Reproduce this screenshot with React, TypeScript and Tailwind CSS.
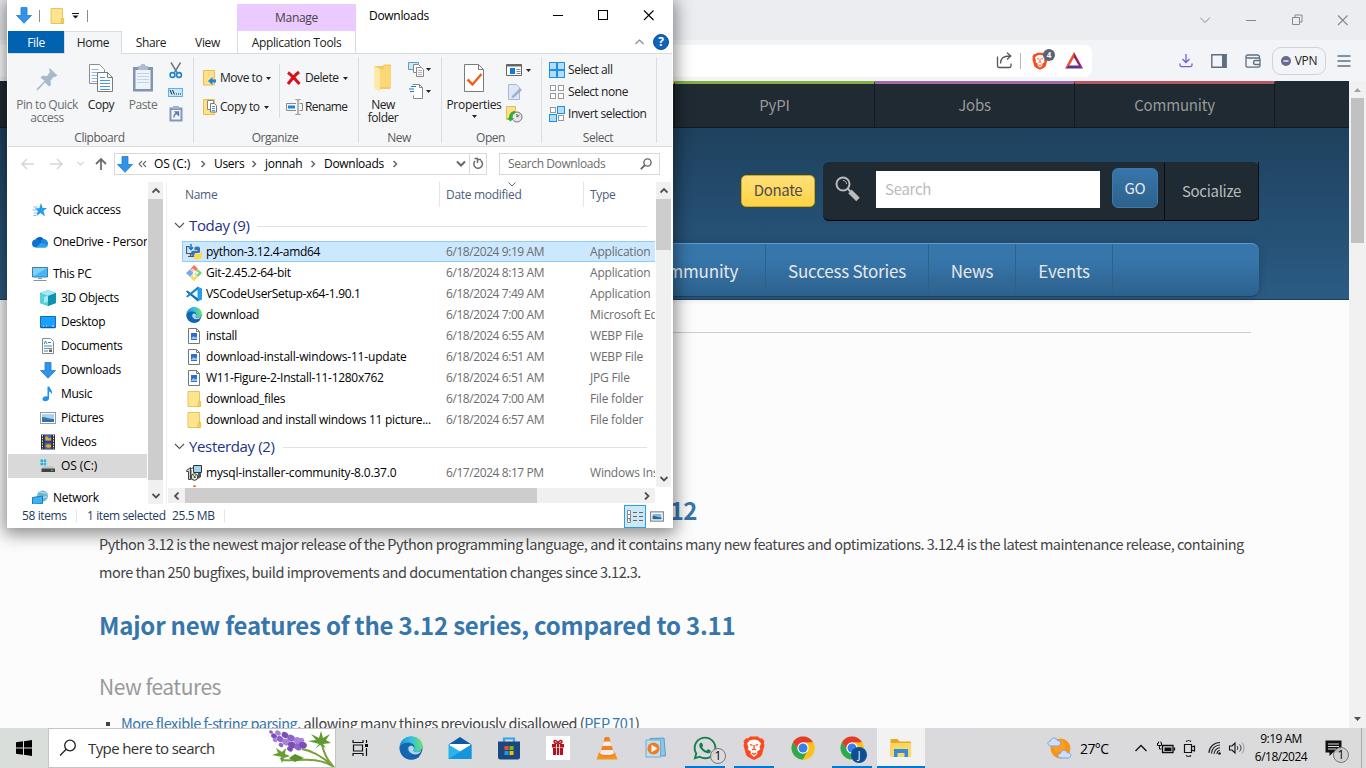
import React from "react";
import { FaWhatsapp } from "react-icons/fa";

type IconProps = { w?: number; h?: number; box?: string; className?: string; children?: React.ReactNode };

function Icon({ w = 16, h = 16, box, className = "", children }: IconProps) {
  return (
    <svg width={w} height={h} viewBox={box ?? `0 0 ${w} ${h}`} className={`shrink-0 ${className}`} fill="none">
      {children}
    </svg>
  );
}

/* ---------- shared explorer icons ---------- */

const BlueArrow = ({ className = "" }: { className?: string }) => (
  <Icon w={16} h={17} className={className}>
    <path d="M5 .5h6v8h4.5L8 16.3.5 8.500H5z" fill="#3093e8" stroke="#1f7fd0" strokeWidth=".8" />
  </Icon>
);

const Folder = ({ className = "" }: { className?: string }) => (
  <Icon w={16} h={16} className={className}>
    <path d="M2 .5h11.500v10H14v5H2z" fill="#ffe48f" stroke="#e8c14d" strokeWidth=".9" />
    <path d="M12.500 10.500h2.200v5h-2.700z" fill="#f7cf55" stroke="#e2b63b" strokeWidth=".6" />
  </Icon>
);

const PicFile = () => (
  <Icon>
    <path d="M2.500.5h8l3 3v12h-11z" fill="#fff" stroke="#777" />
    <path d="M10.500.5v3h3" stroke="#777" />
    <rect x="5" y="5" width="6" height="7" fill="#2c6fd1" />
    <path d="M5 11l2.500-3 1.500 1.500 1.500-1 .5 2.500z" fill="#9cc8f5" />
  </Icon>
);

const EdgeArt = () => (
  <>
    <circle cx="12" cy="12" r="11.500" fill="url(#edgeA)" />
    <path d="M1 10C2 4 7 .500 12.500.500 19 .500 23.500 5 23.500 10c0 3.500-2.700 6-6 6-2.500 0-3.500-1-3-2 1-1.500 1-2 1-3 0-3-3.500-4.500-6.500-4.500C5.500 6.500 2.500 8 1 10z" fill="url(#edgeB)" />
    <path d="M8.500 12c-1 5 2.500 9.500 8 9.500 2 0 3.500-.5 5-1.500-2 2.300-5.500 3.500-9 3.500C6 23.500 1.500 19 .7 13 .700 9 4 7 8 7c4 0 7.500 2 7.300 4.500-1.500-2.500-6-2.500-6.800.5z" fill="#1565b0" />
    <path d="M9.500 11.500c1-2.200 4-2.200 5.500 0 .3 1-.2 1.500-.7 2.300-.5 1 .7 2.500 3 2.500 1.800 0 4-.7 5.300-2-1 2.700-3.100 4.200-6 4.200-4 0-8-3-7.100-7z" fill="#e4edf4" opacity=".8" />
    <defs>
      <linearGradient id="edgeA" x1="0" y1="0" x2="1" y2="1">
        <stop stopColor="#1d9de0" />
        <stop offset="1" stopColor="#0c4f9a" />
      </linearGradient>
      <linearGradient id="edgeB" x1="0" y1=".6" x2="1" y2=".5">
        <stop stopColor="#1b8fdb" />
        <stop offset=".5" stopColor="#2fc2df" />
        <stop offset="1" stopColor="#6fe06a" />
      </linearGradient>
    </defs>
  </>
);

const Thumb = ({ className = "" }: { className?: string }) => (
  <Icon w={16} h={12} className={className}>
    <rect x=".5" y=".5" width="15" height="11" fill="#fff" stroke="#9a9a9a" />
    <rect x="2" y="2" width="12" height="8" fill="#a9d3f5" />
    <path d="M2 5c4 0 7 2 12 2v3H2z" fill="#3a7b93" />
    <path d="M2 8l12-.5V10H2z" fill="#2f6fb5" />
  </Icon>
);

const Down = ({ className = "" }: { className?: string }) => (
  <Icon w={5} h={3} className={className}>
    <path d="M0 0h5L2.500 3z" fill="#222" />
  </Icon>
);

const Chev = ({ d, color = "#666", w = 8, h = 8, sw = 1.5 }: { d: string; color?: string; w?: number; h?: number; sw?: number }) => (
  <Icon w={w} h={h}>
    <path d={d} stroke={color} strokeWidth={sw} />
  </Icon>
);

/* ---------- explorer ---------- */

function TitleBar() {
  return (
    <div className="flex h-[31px] shrink-0">
      <div className="flex w-[229px] items-center pl-2">
        <BlueArrow />
        <div className="ml-[7px] h-3 w-px bg-[#8c8c8c]" />
        <Folder className="ml-[9px]" />
        <Icon w={7} h={6} className="ml-[7px]">
          <path d="M0 .5h7" stroke="#111" />
          <path d="M.5 2.500h6l-3 3z" fill="#111" />
        </Icon>
        <div className="ml-2 h-3 w-px bg-[#8c8c8c]" />
      </div>
      <div className="mt-1 flex w-[119px] items-center justify-center bg-[#ebcaff] text-[#444]">Manage</div>
      <div className="flex flex-1 items-center pl-[13px] text-black">Downloads</div>
      <Icon w={112} h={31} className="mr-[15px]">
        <path d="M8 15.500h10" stroke="#000" />
        <rect x="53.500" y="10.500" width="9" height="9" stroke="#000" />
        <path d="M99 10.500l9.500 9.500M108.500 10.500L99 20" stroke="#000" strokeWidth="1.100" />
      </Icon>
    </div>
  );
}

function RibbonTabs() {
  return (
    <div className="flex h-[23px] shrink-0 items-stretch border-b border-[#dadbdc] tracking-[-.35px] text-[#222]">
      <div className="flex w-14 items-center justify-center bg-[#0063b1] pt-0.5 text-white">File</div>
      <div className="-mb-px flex w-[58px] items-center justify-center border-x border-t border-[#dadbdc] bg-[#f5f6f7]">Home</div>
      <div className="flex w-[58px] items-center justify-center pt-0.5">Share</div>
      <div className="flex w-[55px] items-center justify-center pt-0.5">View</div>
      <div className="ml-0.5 flex w-[119px] items-center justify-center whitespace-nowrap border-x border-[#dadbdc] pt-0.5">Application Tools</div>
      <div className="flex flex-1 items-center justify-end gap-[9px] pr-[3px]">
        <Chev d="M.5 5L4.500 1l4 4" w={9} h={6} color="#8a8a8a" sw={1.200} />
        <Icon w={16} h={16}>
          <circle cx="8" cy="8" r="7.500" fill="#0c64bd" stroke="#0a4f9a" />
          <text x="8" y="12.300" fontSize="12" fontWeight="700" fill="#fff" textAnchor="middle" fontFamily="Open Sans">?</text>
        </Icon>
      </div>
    </div>
  );
}

function Group({ label, className, children }: { label: string; className: string; children: React.ReactNode }) {
  return (
    <div className={`flex shrink-0 flex-col ${className}`}>
      <div className="flex h-[74px]">{children}</div>
      <div className="flex h-[18px] items-center justify-center pr-0.5 pt-px text-[#5a5a5a]">{label}</div>
    </div>
  );
}

const Sep = () => <div className="mt-[3px] h-[86px] w-px shrink-0 bg-[#dcddde]" />;

function SelIcon({ on }: { on: boolean[] }) {
  const at = [[0.5, 0.5], [8.5, 0.5], [0.5, 8.5], [8.5, 8.5]];
  return (
    <Icon>
      {at.map(([x, y], i) =>
        on[i] ? (
          <rect key={i} x={x} y={y} width="7" height="7" fill="#b3dcfa" stroke="#1f8fe0" />
        ) : (
          <rect key={i} x={x + 1} y={y + 1} width="5" height="5" fill="#fff" stroke="#999" />
        )
      )}
    </Icon>
  );
}

function Ribbon() {
  return (
    <div className="flex h-[93px] shrink-0 border-b border-[#dadbdc] bg-[#f5f6f7] tracking-[-.45px] text-[#222]">
      <Group label="Clipboard" className="w-[185px]">
        <div className="flex w-[78px] flex-col items-center pt-[11px] text-center leading-[13px] text-[#6d6d6d]">
          <Icon w={30} h={28}>
            <path d="M17.500 3l8 7.500-2.500 1.500-1.200-.300-3.300 4 .5 4.300-2 1.500-4-4-7 7.500-1.500.5.5-2L12.500 16 8.500 12.500l2-1.700 4.500.2 3-4-.8-1.800z" fill="#a9b8cc" />
          </Icon>
          <span className="mt-[5px] whitespace-nowrap">Pin to Quick<br />access</span>
        </div>
        <div className="flex w-[30px] flex-col items-center pt-[9px] leading-[13px]">
          <Icon w={26} h={30}>
            <path d="M1.500 1.500h10l5 5v14h-15z" fill="#fff" stroke="#8c8c8c" />
            <path d="M3.500 6.500h7M3.500 9.500h10M3.500 12.500h10M3.500 15.500h10M3.500 18.500h10" stroke="#8bb8ef" />
            <path d="M9.500 9.500h10l5 5v14h-15z" fill="#fff" stroke="#7a7a7a" />
            <path d="M19.500 9.500v5h5" stroke="#7a7a7a" />
            <path d="M12 14.500h5M12 17.500h10M12 20.500h10M12 23.500h10M12 26.500h10" stroke="#4c94e6" />
          </Icon>
          <span className="mt-[5px]">Copy</span>
        </div>
        <div className="flex w-[54px] flex-col items-center pt-[9px] leading-[13px] text-[#6d6d6d]">
          <Icon w={22} h={30}>
            <path d="M1 4h20v24.500H1z" fill="#8094b4" />
            <path d="M3.500 7h15v19h-15z" fill="#eef3fa" />
            <path d="M5 10.500h12M5 13.500h12M5 16.500h12M5 19.500h12" stroke="#c4d2e6" />
            <path d="M6 3h2.500c0-3 5-3 5 0H16v4H6z" fill="#aebace" />
          </Icon>
          <span className="mt-[5px]">Paste</span>
        </div>
        <div className="-ml-0.5 flex flex-col items-center gap-[6px] pt-2">
          <Icon w={14} h={17}>
            <path d="M2 .5l6 10M11.500.5l-6 10" stroke="#6d7b88" strokeWidth="1.500" />
            <circle cx="3.500" cy="13" r="2.400" stroke="#1c84cf" strokeWidth="1.600" />
            <circle cx="10" cy="13" r="2.400" stroke="#1c84cf" strokeWidth="1.600" />
          </Icon>
          <Icon w={15} h={9} className="mt-[3px]">
            <rect x=".5" y=".5" width="14" height="8" fill="#c6e6fb" stroke="#5eb0e8" />
            <path d="M2 2l2 4.500M4.500 2l2 4.500M8 6h1M10 6h1M12 6h1" stroke="#222" />
          </Icon>
          <Icon w={14} h={18} className="mt-0.5">
            <path d="M.5 2.500h13v14H.5z" fill="#8497b6" />
            <path d="M2.500 5h9v9.500h-9z" fill="#f2f6fb" />
            <path d="M4 1h6v3H4z" fill="#a3b2ca" />
            <path d="M5 12.500c0-3 1-4 3-4M6.500 7H9.500v3z" stroke="#6079a6" strokeWidth="1.400" />
          </Icon>
        </div>
      </Group>
      <Sep />
      <Group label="Organize" className="w-[164px]">
        <div className="flex w-[85px] shrink-0 flex-col gap-[13px] pl-2 pt-4">
          <div className="flex h-4 items-center whitespace-nowrap">
            <Icon w={16} h={16}>
              <path d="M1.500.5h11v14.500h-11z" fill="#ffe08a" stroke="#e8bf4a" />
              <path d="M6 11l4.500-4v2.500H14v3h-3.500V15z" fill="#1c86e0" />
            </Icon>
            <span className="ml-0.5 w-[46px]">Move to</span>
            <Down />
          </div>
          <div className="flex h-4 items-center whitespace-nowrap">
            <Icon w={16} h={16}>
              <path d="M1.500.5h11v15h-11z" fill="#ffe08a" stroke="#e8bf4a" />
              <path d="M5.500 1.500h6v9h-6z" fill="#fff" stroke="#888" />
              <path d="M8.500 4.500h4l2 2v6.500h-6z" fill="#fff" stroke="#777" />
              <path d="M10 7.500h3M10 9.500h3M10 11.500h3" stroke="#4c94e6" />
            </Icon>
            <span className="ml-0.5 w-11">Copy to</span>
            <Down />
          </div>
        </div>
        <div className="mt-[10px] h-[54px] w-px shrink-0 bg-[#dcddde]" />
        <div className="flex flex-col gap-[13px] pl-[6px] pt-4">
          <div className="flex h-4 items-center whitespace-nowrap">
            <Icon w={16} h={16}>
              <path d="M2 2.500c4 3 8 7.500 11.500 11.500M13 2c-4 3-8 8-11 12" stroke="#d8101a" strokeWidth="3" />
            </Icon>
            <span className="ml-[3px] w-[38px]">Delete</span>
            <Down />
          </div>
          <div className="flex h-4 items-center whitespace-nowrap">
            <Icon w={17} h={16}>
              <path d="M10 4.500H.5v7H10M13.500 4.500h3v7h-3" stroke="#8a8a8a" />
              <rect x="2" y="6.500" width="7" height="3" fill="#1c86e0" />
              <path d="M9.500.5c2 0 2.500.5 2.500 1v13c0 .5-.5 1-2.500 1M14.500.5c-2 0-2.500.5-2.500 1M14.500 15.500c-2 0-2.500-.5-2.500-1" stroke="#777" />
            </Icon>
            <span className="ml-0.5 tracking-[-.6px]">Rename</span>
          </div>
        </div>
      </Group>
      <Sep />
      <Group label="New" className="w-[82px]">
        <div className="flex w-12 flex-col items-center pt-[9px] text-center leading-[13px]">
          <Icon w={22} h={30}>
            <path d="M2 3h9l1-1.500h7V24l-1 2H8z" fill="#f4c95f" />
            <path d="M2 3l6 3v23l-6-4z" fill="#ffe9a8" />
            <path d="M8 6h4V3h7v21H8z" fill="#fbd777" />
          </Icon>
          <span className="mt-[5px]">New<br />folder</span>
        </div>
        <div className="flex flex-col gap-[5px] pl-px pt-[7px]">
          <div className="flex items-center gap-px">
            <Icon w={17} h={17}>
              <path d="M.5 1.500h10v7H.5z" fill="#cfe9f8" stroke="#5a9fc0" />
              <path d="M5.500 3.500h5l2 2v6h-7z" fill="#fff" stroke="#888" />
              <path d="M8.500 6.500h5l2 2v7h-7z" fill="#f4f7fd" stroke="#888" />
              <path d="M10 9.500h4M10 11.500h4M10 13.500h4" stroke="#b99" strokeWidth=".8" />
            </Icon>
            <Down />
          </div>
          <div className="flex items-center gap-px">
            <Icon w={17} h={17}>
              <path d="M4.500 1.500h7l3 3v11h-9v-3" fill="#fff" stroke="#888" />
              <path d="M11.500 1.500v3h3" stroke="#888" />
              <path d="M3 3.500h5M1 6h5M2 8.500h4" stroke="#2678c8" strokeWidth="1.200" />
            </Icon>
            <Down />
          </div>
        </div>
      </Group>
      <Sep />
      <Group label="Open" className="w-[99px]">
        <div className="flex w-[64px] flex-col items-center pt-[9px] leading-[13px]">
          <Icon w={22} h={30}>
            <path d="M1.500 1.500h14l5 5v22h-19z" fill="#fff" stroke="#7a7a7a" />
            <path d="M15.500 1.500v5h5" stroke="#7a7a7a" />
            <path d="M4.500 16.500l5 5 9-10.500" stroke="#f2611b" strokeWidth="2.500" />
          </Icon>
          <span className="mt-[5px] tracking-[-.3px]">Properties</span>
          <Down className="mt-1" />
        </div>
        <div className="flex flex-col gap-[6px] pt-2">
          <div className="flex items-center gap-1">
            <Icon w={16} h={16}>
              <path d="M.5 2.500h15v11H.5z" fill="#fff" stroke="#666" />
              <path d="M.5 3.500h15" stroke="#666" strokeWidth="2" />
              <rect x="4" y="6" width="5" height="6" fill="#0f7bd8" />
              <path d="M10.500 7.500h4M10.500 9.500h4M10.500 11.500h4" stroke="#888" />
            </Icon>
            <Down />
          </div>
          <Icon w={16} h={16}>
            <path d="M2.500.5h8l3 3v12h-11z" fill="#dde7f7" stroke="#a9b9d4" />
            <path d="M6 12l8-8 2 2-8 7.500-2.500.5z" fill="#9eb0d2" />
          </Icon>
          <Icon w={17} h={17}>
            <path d="M.5.500h9v13h-9z" fill="#ffe08a" stroke="#e8bf4a" />
            <circle cx="11" cy="11" r="5" fill="#e6e6e6" stroke="#777" />
            <path d="M11 8v3l2.500-2" stroke="#555" />
            <path d="M3 12c0-5 3-7 6-7v2.500c-2 0-3 1.500-3 4.500h2l-3.500 3.500L1 12z" fill="#2fae2f" />
          </Icon>
        </div>
      </Group>
      <Sep />
      <Group label="Select" className="w-[114px]">
        <div className="flex flex-col gap-[6px] pl-[7px] pt-2">
          {[
            ["Select all", [true, true, true, true]],
            ["Select none", [false, false, false, false]],
            ["Invert selection", [false, true, true, false]],
          ].map(([t, on]) => (
            <div key={t as string} className="flex h-4 items-center gap-[3px] whitespace-nowrap">
              <SelIcon on={on as boolean[]} />
              <span>{t as string}</span>
            </div>
          ))}
        </div>
      </Group>
      <Sep />
    </div>
  );
}

function AddressRow() {
  const r = "M1.500 1l3 3-3 3";
  return (
    <div className="flex h-[35px] shrink-0 items-center pb-px text-black">
      <div className="flex w-[106px] items-center pl-[13px]">
        <Icon w={88} h={14}>
          <path d="M13 7H1M6 2L1 7l5 5" stroke="#d6d6d6" strokeWidth="1.500" />
          <path d="M29 7h12M36 2l5 5-5 5" stroke="#d6d6d6" strokeWidth="1.500" />
          <path d="M56.500 5l3 3 3-3" stroke="#d6d6d6" strokeWidth="1.300" />
          <path d="M80 13V2M75 7l5-5 5 5" stroke="#6c6c6c" strokeWidth="1.800" />
        </Icon>
      </div>
      <div className="flex h-[22px] w-[373px] items-center border border-[#d9d9d9] pl-0.5">
        <BlueArrow />
        <Icon w={9} h={8} className="ml-[5px]">
          <path d="M4 1L1 4l3 3M8 1L5 4l3 3" stroke="#666" strokeWidth="1.100" />
        </Icon>
        <span className="ml-[7px] w-[46px] whitespace-nowrap tracking-[-.1px]">OS (C:)</span>
        <Chev d={r} />
        <span className="ml-[6px] w-[37px]">Users</span>
        <Chev d={r} />
        <span className="ml-[6px] w-[45px]">jonnah</span>
        <Chev d={r} />
        <span className="ml-[6px] w-[68px]">Downloads</span>
        <Chev d={r} />
        <div className="flex-1" />
        <Chev d="M1 1.500l4 4 4-4" w={10} h={8} sw={2} />
        <div className="ml-[3px] h-5 w-px bg-[#d9d9d9]" />
        <Icon w={16} h={20}>
          <path d="M4.500 7a4.300 4.300 0 1 0 5.600-.600M4 4.500h3.500M7 9V5.500h3.500" stroke="#6a6a6a" strokeWidth="1.500" transform="translate(.5 0)" />
        </Icon>
      </div>
      <div className="ml-3 flex h-[22px] w-[161px] items-center justify-between border border-[#d9d9d9] pl-2 pr-[7px] tracking-[-.4px] text-[#6d6d6d]">
        Search Downloads
        <Icon w={12} h={12}>
          <circle cx="7.500" cy="4.500" r="3.600" stroke="#666" strokeWidth="1.400" />
          <path d="M5 7L.8 11.200" stroke="#666" strokeWidth="1.800" />
        </Icon>
      </div>
    </div>
  );
}

const navIcons: Record<string, React.ReactNode> = {
  star: (
    <Icon>
      <path d="M9 1l1.700 5H15l-3.500 3 1.500 5.500L8.500 11 4.500 14l1.300-5L3 6.200h4.300z" fill="#2a9be8" />
      <path d="M1.500 5h4M.5 8h4M2 11h3M1.500 13.500h2.500" stroke="#5db7f0" strokeWidth=".9" />
    </Icon>
  ),
  cloud: (
    <Icon>
      <path d="M3.500 5.500C5 2.500 9.500 2 11.500 5l-5 6z" fill="#0a5fb8" />
      <path d="M11 5c3 0 5 2 5 4.500S14.500 13.500 13 13.500H4L8 7z" fill="#1a8ae6" />
      <path d="M3.500 5.500c2-.5 3 0 4 .800L12 9l-8 4.500C1.500 13.500 0 12 0 9.500s1.500-4 3.500-4z" fill="#1273cf" />
      <path d="M4 13.500L9.500 8.500l6 3c-.5 1.500-1.500 2-2.500 2z" fill="#2aa5f2" />
    </Icon>
  ),
  pc: (
    <Icon>
      <path d="M.5 1.500h15v9.500H.5z" fill="#46b7f5" stroke="#3a7ea8" />
      <path d="M1 2l14 0L1 10.500z" fill="#7fd0fa" />
      <path d="M6 12.500h4M1.500 14.500h13" stroke="#7d97ab" />
    </Icon>
  ),
  cube: (
    <Icon>
      <path d="M8 0l8 3v10l-8 3-8-3V3z" fill="#1fa9c4" />
      <path d="M8 0l8 3-8 3-8-3z" fill="#a5eaf2" />
      <path d="M0 3l8 3v10l-8-3z" fill="#58cfde" />
      <path d="M8 6l8-3v10l-8 3z" fill="#0e93b0" />
      <path d="M4 7l4-1.500v6L4 13z" fill="#c8f3f7" opacity=".7" />
    </Icon>
  ),
  desk: (
    <Icon>
      <path d="M.5 2.500h15v11H.5z" fill="#1aa0ff" stroke="#0b6fc0" />
      <path d="M1 13.500h14" stroke="#0b5ea6" strokeWidth="1.500" />
      <path d="M3 12h1M6 12h1M12 12h2" stroke="#fff" strokeWidth=".8" />
    </Icon>
  ),
  doc: (
    <Icon>
      <path d="M2.500.5h8l3 3v12h-11z" fill="#fff" stroke="#8a8a8a" />
      <path d="M4 6l1.500-3L7 6M8 4.500h3M4 8h8M4 13h4" stroke="#2f86b8" />
      <path d="M4 10.500h8" stroke="#888" />
      <path d="M9 11.500h3v2.500H9z" fill="#666" />
    </Icon>
  ),
  down: <BlueArrow />,
  music: (
    <Icon>
      <path d="M7.500.5h1.800c.5 2.500 3.500 3.500 2.700 8-.6-1.800-1.500-2.500-3-3v7c0 3-6.500 4-6.500.5 0-2 2.500-3 5-2.500z" fill="#1b96ea" />
    </Icon>
  ),
  pic: <Thumb />,
  video: (
    <Icon>
      <path d="M1 .5h14v15H1z" fill="#2d2d2d" />
      <path d="M2.500 1v14M13.500 1v14" stroke="#eee" strokeDasharray="1.500 1.200" />
      <path d="M4.500 1h7v6.500h-7z" fill="#3f62b8" />
      <path d="M4.500 8.500h7V15h-7z" fill="#3f62b8" />
      <path d="M5 4l2-2 2 2.500 2-1v3H6zM5 12l3-2 3 1v2l-3 1z" fill="#e6a92c" />
    </Icon>
  ),
  drive: (
    <Icon>
      <path d="M.5 1.500h2.500v2.500H.5zM3.700 1.500h2.500v2.500H3.700zM.5 4.800h2.500v2.500H.5zM3.700 4.800h2.500v2.500H3.700z" fill="#17b5e8" />
      <path d="M3.500 8h9l2.500 2.500H1.500z" fill="#c4c4c4" />
      <path d="M1.500 10.500H15V14H1.500z" fill="#444" />
      <path d="M11 12.200h2" stroke="#3fdc5a" />
    </Icon>
  ),
  net: (
    <Icon>
      <circle cx="10.500" cy="6" r="5.500" fill="#6fb5d8" />
      <path d="M7 2c3-1 4 2 7 1M6 6c3 2 6 1 9 1" stroke="#cfe8f4" />
      <path d="M.5 7.500l10-1.500v7.500l-10 1z" fill="#39b2f5" stroke="#2577ad" />
    </Icon>
  ),
};

function NavPane() {
  const items: [string, string, boolean, string][] = [
    ["star", "Quick access", false, "mb-2"],
    ["cloud", "OneDrive - Personal", false, "mb-2"],
    ["pc", "This PC", false, ""],
    ["cube", "3D Objects", true, ""],
    ["desk", "Desktop", true, ""],
    ["doc", "Documents", true, ""],
    ["down", "Downloads", true, ""],
    ["music", "Music", true, ""],
    ["pic", "Pictures", true, ""],
    ["video", "Videos", true, ""],
    ["drive", "OS (C:)", true, "mb-2 bg-[#d9d9d9] tracking-[-.1px]"],
    ["net", "Network", false, ""],
  ];
  return (
    <div className="flex h-[322px] w-[159px] shrink-0">
      <div className="w-[139px] shrink-0 overflow-hidden pt-4 text-black">
        {items.map(([ic, t, sub, cls]) => (
          <div key={t} className={`flex h-6 items-center gap-[5px] whitespace-nowrap ${sub ? "pl-8" : "pl-6"} ${cls}`}>
            {navIcons[ic]}
            <span>{t}</span>
          </div>
        ))}
      </div>
      <div className="ml-px flex w-[15px] shrink-0 flex-col bg-[#f0f0f0]">
        <div className="flex h-[17px] items-center justify-center">
          <Chev d="M.5 5.500L4 2l3.500 3.500" color="#505050" sw={1.800} />
        </div>
        <div className="h-[281px] bg-[#cdcdcd]" />
        <div className="flex flex-1 items-end justify-center pb-1">
          <Chev d="M.5 2L4 5.500 7.500 2" color="#505050" sw={1.800} />
        </div>
      </div>
      <div className="ml-[3px] w-px bg-[#f0f0f0]" />
    </div>
  );
}

const fileIcons: Record<string, React.ReactNode> = {
  py: (
    <Icon>
      <path d="M3.500 2.500h-3v7h7M2 12.500h6M4.500 10v2" stroke="#555" strokeWidth="1.200" />
      <path d="M5 0v5M2.800 3.200L5 5.500l2.200-2.300" stroke="#1476c8" strokeWidth="1.500" />
      <path d="M12 3.500c-2 0-3 .5-3 2V7h3v.7H7.500C6 7.700 5.500 9 5.500 10.500S6.500 13 7.500 13H9v-1.500c0-1 .8-1.500 2-1.500h2c1 0 1.500-.7 1.500-1.500v-3c0-1.200-1-2-2.500-2z" fill="#3a74a8" transform="translate(-.5 -1)" />
      <path d="M11 14.500c2.500 0 3.500-.8 3.500-2v-1.200h-3v-.8H16V8.500c.5 5 0 7-5 7-2 0-3-1-3-2v-2c0-1 .8-1.500 2-1.500h2.500c1 0 2-.5 2-1.500V6.800c2 .2 1.800 4 1.500 5.200-.5 1.500-1.500 3.500-4.500 3.500z" fill="#ffd848" />
    </Icon>
  ),
  git: (
    <Icon>
      <path d="M8 0l4 4-4 3.500L4.500 4z" fill="#f4745f" />
      <path d="M12 4.200L16 8l-4 4-3.500-4z" fill="#7fd279" />
      <path d="M4 4.200L7.500 8 4 12 0 8z" fill="#79a8f0" />
      <path d="M8 8.500l4 3.800L8 16l-4-3.800z" fill="#fbd75c" />
      <path d="M6 4l5 4M8 4.500v7" stroke="#fff" strokeWidth="1.200" />
      <circle cx="8" cy="11" r="1.300" fill="#fff" />
      <circle cx="11" cy="8" r="1.300" fill="#fff" />
    </Icon>
  ),
  vs: (
    <Icon>
      <path d="M11.500.5L16 2.500v11l-4.500 2z" fill="#23a0ea" />
      <path d="M1.300 4.500L12 12.500V15.500L0 5.700z" fill="#0a6ab5" />
      <path d="M1.300 11.500L12 3.500V.5L0 10.300z" fill="#1484cf" />
    </Icon>
  ),
  edge: <Icon box="0 0 24 24"><EdgeArt /></Icon>,
  img: <PicFile />,
  folder: <Folder />,
  msi: (
    <Icon>
      <path d="M7.500.5h8v7h-8z" fill="#9fd4f5" stroke="#333" />
      <path d="M.5 5.500l4-3v12h-2v-8h-2zM5 4l3-2M5 5v10" stroke="#444" fill="#ccc" />
      <circle cx="8.500" cy="12" r="3.300" fill="#e8e8e8" stroke="#333" />
      <path d="M7 10l3 3M10 9.500L8 13" stroke="#3fb54f" />
      <circle cx="8.500" cy="12" r=".8" fill="#222" />
      <path d="M12 8v6l3-2V8z" fill="#555" />
    </Icon>
  ),
};

function FileRow({ icon, name, date, type, sel, wide }: { icon: string; name: string; date: string; type: string; sel?: boolean; wide?: boolean }) {
  return (
    <div className={`ml-[15px] flex h-[21px] shrink-0 items-center whitespace-nowrap border-y border-l pl-[3px] ${sel ? "border-[#8fcbfb] bg-[#cce8ff]" : "border-transparent"}`}>
      {fileIcons[icon]}
      <span className={`ml-1 w-[240px] shrink-0 overflow-hidden text-black ${wide ? "tracking-[-.18px]" : ""}`}>{name}</span>
      <span className="w-36 shrink-0 tracking-[-.42px] text-[#6d6d6d]">{date}</span>
      <span className="shrink-0 tracking-[-.2px] text-[#6d6d6d]">{type}</span>
    </div>
  );
}

const GroupHead = ({ label }: { label: string }) => (
  <div className="flex h-8 shrink-0 items-center pl-[7px] pr-2 text-[15px] tracking-[-.35px] text-[#1e3287]">
    <Chev d="M1 1l4.500 4.500L10 1" w={11} h={7} sw={1.100} color="#555" />
    <span className="ml-1">{label}</span>
    <div className="ml-2 mt-0.5 h-px flex-1 bg-[#e2e2e2]" />
  </div>
);

function FilePane() {
  const rows: [string, string, string, string][] = [
    ["py", "python-3.12.4-amd64", "6/18/2024 9:19 AM", "Application"],
    ["git", "Git-2.45.2-64-bit", "6/18/2024 8:13 AM", "Application"],
    ["vs", "VSCodeUserSetup-x64-1.90.1", "6/18/2024 7:49 AM", "Application"],
    ["edge", "download", "6/18/2024 7:00 AM", "Microsoft Edge HTML"],
    ["img", "install", "6/18/2024 6:55 AM", "WEBP File"],
    ["img", "download-install-windows-11-update", "6/18/2024 6:51 AM", "WEBP File"],
    ["img", "W11-Figure-2-Install-11-1280x762", "6/18/2024 6:51 AM", "JPG File"],
    ["folder", "download_files", "6/18/2024 7:00 AM", "File folder"],
    ["folder", "download and install windows 11 picture...", "6/18/2024 6:57 AM", "File folder"],
  ];
  return (
    <div className="flex w-[505px] shrink-0 flex-col">
      <div className="flex h-[305px]">
        <div className="flex w-[488px] shrink-0 flex-col overflow-hidden">
          <div className="flex h-[27px] shrink-0 text-[#4c607a]">
            <div className="flex h-[25px] w-[273px] items-center border-r border-[#e5e5e5] pl-[18px]">Name</div>
            <div className="relative flex h-[25px] w-36 items-center border-r border-[#e5e5e5] pl-[6px]">
              Date modified
              <div className="absolute left-[68px] top-0">
                <Chev d="M.5.5L4 4 7.500.5" h={5} sw={1} />
              </div>
            </div>
            <div className="flex h-[25px] items-center pl-[6px]">Type</div>
          </div>
          <GroupHead label="Today (9)" />
          {rows.map(([i, n, d, t], k) => (
            <FileRow key={n} icon={i} name={n} date={d} type={t} sel={k === 0} wide={k === 5} />
          ))}
          <GroupHead label="Yesterday (2)" />
          <FileRow icon="msi" name="mysql-installer-community-8.0.37.0" date="6/17/2024 8:17 PM" type="Windows Installer" wide />
          <div className="ml-[26px] mt-0.5 h-1 w-[3px] rounded-t bg-[#e8801c]" />
        </div>
        <div className="ml-px flex w-[15px] flex-col bg-[#f0f0f0]">
          <div className="flex h-[17px] items-center justify-center">
            <Chev d="M.5 5.500L4 2l3.500 3.500" color="#505050" sw={1.800} />
          </div>
          <div className="h-[51px] bg-[#cdcdcd]" />
          <div className="flex flex-1 items-end justify-center pb-1">
            <Chev d="M.5 2L4 5.500 7.500 2" color="#505050" sw={1.800} />
          </div>
        </div>
      </div>
      <div className="ml-px mt-px flex h-[15px] w-[487px] items-center bg-[#f0f0f0]">
        <div className="flex w-[17px] justify-center">
          <Chev d="M5.500.5L2 4l3.500 3.500" color="#505050" sw={1.800} />
        </div>
        <div className="h-full w-[352px] bg-[#cdcdcd]" />
        <div className="flex flex-1 justify-end pr-1">
          <Chev d="M2 .5L5.500 4 2 7.500" color="#505050" sw={1.800} />
        </div>
      </div>
    </div>
  );
}

function StatusBar() {
  return (
    <div className="flex h-6 shrink-0 items-center pl-[14px] tracking-[-.4px] text-[#1e3a5f]">
      <span className="w-[54px] whitespace-nowrap">58 items</span>
      <div className="h-3 w-px bg-[#e5e5e5]" />
      <span className="ml-[10px] w-[85px] whitespace-nowrap">1 item selected</span>
      <span className="w-[52px] whitespace-nowrap">25.5 MB</span>
      <div className="h-3 w-px bg-[#e5e5e5]" />
      <div className="flex flex-1 items-center justify-end pr-2">
        <div className="flex h-[23px] w-[22px] items-center justify-center border border-[#2ba0da] bg-[#cce8f6]">
          <Icon w={16} h={13}>
            <path d="M.5.5h3v12h-3z" fill="#fff" stroke="#888" />
            <path d="M.5 4.500h3M.5 8.500h3" stroke="#888" />
            <path d="M6 2.500h4M12 2.500h4M6 6.500h4M12 6.500h4M6 10.500h4M12 10.500h4" stroke="#666" />
            <path d="M2 10h1" stroke="#d33" />
          </Icon>
        </div>
        <Icon w={14} h={11} box="0 0 16 12" className="ml-1">
          <rect x=".7" y=".7" width="14.600" height="10.600" fill="#fff" stroke="#8a8a8a" strokeWidth="1.400" />
          <path d="M3 3h10v6H3z" fill="#7db8ee" />
          <path d="M3 5c4 0 6 2 10 2v2H3z" fill="#2c6a8a" />
        </Icon>
      </div>
    </div>
  );
}

function Explorer() {
  return (
    <div className="absolute left-[7px] top-0 flex h-[528px] w-[666px] flex-col bg-white px-px font-['Open_Sans',sans-serif] text-[12px] tracking-[-.3px] shadow-[0_3px_16px_3px_rgba(0,0,0,.45)]">
      <TitleBar />
      <RibbonTabs />
      <Ribbon />
      <AddressRow />
      <div className="flex h-[322px] shrink-0">
        <NavPane />
        <FilePane />
      </div>
      <StatusBar />
    </div>
  );
}

/* ---------- browser ---------- */

const Brave = ({ w = 22, h = 24 }: { w?: number; h?: number }) => (
  <Icon w={w} h={h} box="0 0 22 24">
    <path d="M7 .5h8l2 2 2-.2 2.500 3-.7 2 .7 2.200-2.500 9c-.3 1-1 1.800-2 2.500L11 24l-6-3c-1-.7-1.700-1.500-2-2.500l-2.500-9L1.200 7.300.5 5.300l2.500-3 2 .2z" fill="#fb4a1d" />
    <path d="M11 3.500l4 .8 3 3-1.500 4 .8 2-3.300 2.500.5 2L11 21l-3.500-3.200.5-2-3.300-2.500.8-2L4 7.300l3-3z" fill="#fff" />
    <path d="M7 8.500l2.500.8M15 8.500l-2.500.8M11 9v3.500M9 14l2-1 2 1M9 17l2 1.500 2-1.500" stroke="#fb4a1d" strokeWidth="1.300" />
  </Icon>
);

function BrowserChrome() {
  return (
    <>
      <div className="flex h-10 shrink-0 items-center justify-end bg-[#ecedf1]">
        <Icon w={166} h={40}>
          <path d="M0 17.500l5 5 5-5" stroke="#888" />
          <path d="M46 20.500h10" stroke="#888" />
          <path d="M92.500 17.500h7v7h-7zM95 17.500v-2.500h7v7h-2.500" stroke="#888" />
          <path d="M138 15.500l9.500 9.500M147.500 15.500L138 25" stroke="#888" strokeWidth="1.100" />
        </Icon>
      </div>
      <div className="flex h-[41px] shrink-0 items-center bg-[#f3f4f7]">
        <div className="flex h-8 w-[1092px] items-center justify-end rounded-r-lg bg-white pr-[9px]">
          <Icon w={17} h={17}>
            <path d="M1.500 4.500v9.500a1.500 1.500 0 0 0 1.500 1.500h10.500a1.500 1.500 0 0 0 1.500-1.500v-2.500" stroke="#555" strokeWidth="1.300" />
            <path d="M4.500 11.500c0-5 3-7.500 9-7.500M11 .8l3.800 3.200L11 7.500" stroke="#555" strokeWidth="1.300" />
          </Icon>
          <div className="ml-[7px] h-4 w-px bg-[#b5b7bf]" />
          <div className="relative w-[35px] pl-[11px]">
            <Brave w={16} h={18} />
            <div className="absolute left-[22px] top-[-3px] flex size-3 items-center justify-center rounded-full bg-[#5c6174] font-['Open_Sans',sans-serif] text-[8px] font-bold text-white">4</div>
          </div>
          <Icon w={18} h={17} className="ml-[9px]">
            <path d="M9 0L0 16.500 4 14l5-8.500z" fill="#ff4724" />
            <path d="M9 0l9 16.500-4-2.500-5-8.500z" fill="#9e1f63" />
            <path d="M0 16.500L4 13.500h10l4 3z" fill="#662d91" />
          </Icon>
        </div>
        <Icon w={14} h={15} className="ml-[87px]">
          <path d="M7 1v8.500M3.500 6L7 9.500 10.500 6" stroke="#6a63e0" strokeWidth="1.300" />
          <path d="M1 10.500v1.500c0 1 .5 1.700 1.700 1.700h8.600c1.200 0 1.700-.7 1.700-1.700v-1.500" stroke="#6a63e0" strokeWidth="1.300" />
        </Icon>
        <Icon w={16} h={14} className="ml-[18px]">
          <path d="M.8.8h14.400v12.400H.8z" stroke="#5f6f80" strokeWidth="1.400" />
          <path d="M11 1h4v12h-4z" fill="#5f6f80" />
        </Icon>
        <Icon w={16} h={14} className="ml-[18px]">
          <path d="M14.500 4V3c0-1-.7-2-2-2H3C1.700 1 1 1.800 1 2.500S1.700 4 3 4h10.500c1 0 1.500.5 1.500 1.500v6c0 1-.5 1.700-1.500 1.700H3c-1.300 0-2-.7-2-1.700v-9" stroke="#5f6f80" strokeWidth="1.300" />
          <path d="M15 6.500h-4.500C9 6.500 8.500 7.500 8.500 8.500s.5 2 2 2H15" stroke="#5f6f80" strokeWidth="1.300" />
        </Icon>
        <div className="ml-[11px] flex h-7 w-[54px] items-center justify-center gap-1 rounded-[9px] border border-[#ccd3dc] font-['Open_Sans',sans-serif] text-[12px] tracking-[-.3px] text-[#222]">
          <Icon w={10} h={10}>
            <circle cx="5" cy="5" r="5" fill="#676a8c" />
            <path d="M2.500 5h5" stroke="#fff" strokeWidth="1.300" />
          </Icon>
          VPN
        </div>
        <Icon w={14} h={12} className="ml-[11px]">
          <path d="M.5 1h13M.5 6h13M.5 11h13" stroke="#5f6f80" strokeWidth="1.300" />
        </Icon>
      </div>
    </>
  );
}

function SitePage() {
  const top: [string, string][] = [
    ["Python", "border-t-[#3776ab]"],
    ["PSF", "border-t-[#3776ab]"],
    ["Docs", "border-t-[#ffd343]"],
    ["PyPI", "border-t-[#82b043]"],
    ["Jobs", "border-t-[#a06ba5]"],
    ["Community", "border-t-[#b55863]"],
  ];
  const nav: [string, string][] = [
    ["About", "w-[120px]"],
    ["Downloads", "w-[180px]"],
    ["Documentation", "w-[229px]"],
    ["Community", "w-[146px]"],
    ["Success Stories", "w-[163px]"],
    ["News", "w-[87px]"],
    ["Events", "w-[97px]"],
  ];
  return (
    <div className="flex w-[1349px] flex-col overflow-hidden bg-[#fcfcfd] font-['Noto_Sans_CJK_JP',sans-serif]">
      <div className="flex h-[47px] shrink-0 border-b border-[#111a21] bg-[#1f2a33] pl-[75px] text-[15px] tracking-[-.2px] text-[#999]">
        {top.map(([t, c]) => (
          <div key={t} className={`flex w-[200px] items-center justify-center border-r border-t-[3px] border-r-[#13191f] ${c}`}>{t}</div>
        ))}
      </div>
      <div className="flex h-[172px] shrink-0 flex-col border-b border-[#1d3f5a] bg-linear-to-b from-[#1e415e] to-[#2b5b84] pl-[91px] pr-[90px]">
        <div className="flex h-[115px] items-start justify-end pt-[34px]">
          <div className="mr-2 mt-[13px] flex h-8 w-[74px] items-center justify-center rounded-[5px] border border-[#dca900] bg-linear-to-b from-[#ffdf76] to-[#ffd343] pb-0.5 text-[15px] tracking-[-.3px] text-[#4d4d4d]">Donate</div>
          <div className="flex h-[59px] w-[436px] rounded-md border-b border-black bg-[#1f2a33]">
            <Icon w={53} h={58}>
              <circle cx="20" cy="22" r="6.500" stroke="#bbb" strokeWidth="2" />
              <path d="M20 18.500c2 0 3.500 1.500 3.500 3.500" stroke="#bbb" />
              <path d="M24.500 26.500l3 3" stroke="#bbb" strokeWidth="2" />
              <path d="M27 29.500l8 8" stroke="#bbb" strokeWidth="5" />
            </Icon>
            <div className="mt-[9px] flex h-[37px] w-56 items-center bg-white pl-[9px] text-[15px] tracking-[-.3px] text-[#bbb]">Search</div>
            <div className="ml-3 mt-[6px] flex h-10 w-[46px] items-center justify-center rounded-md border border-[#3b79ae] bg-linear-to-b from-[#3776ab] to-[#2d618c] text-[15px] tracking-[-.3px] text-[#e6e8ea]">GO</div>
            <div className="ml-[6px] flex flex-1 items-center justify-center border-x border-[#0b0e11] text-[15px] tracking-[-.3px] text-[#bbb]">Socialize</div>
          </div>
        </div>
        <div className="flex h-[54px] w-[1168px] rounded-lg border-b border-t border-b-[#1b4263] border-t-[#5e9cce] bg-linear-to-b from-[#3776ab] from-30% to-[#2d618c] pt-0.5 text-[17px] tracking-[-.2px] text-[#e6e8ea] shadow-[0_0_8px_rgba(0,0,0,.2)]">
          {nav.map(([t, c]) => (
            <div key={t} className={`-mt-0.5 flex shrink-0 items-center justify-center border-r border-[#2d618c] pt-0.5 ${c}`}>{t}</div>
          ))}
        </div>
      </div>
      <div className="ml-[99px] flex w-[1152px] flex-col text-[14.5px] leading-[28px] tracking-[-.5px] text-[#444]">
        <div className="h-[33px] shrink-0 border-b border-[#caccce]" />
        <h2 className="mt-[162px] whitespace-nowrap text-[24px] font-bold leading-[30px] tracking-[-.53px] text-[#3776ab]">This is the fourth maintenance release of Python 3.12</h2>
        <p className="mt-[5px] whitespace-nowrap">
          Python 3.12 is the newest major release of the Python programming language, and it contains many new features and optimizations. 3.12.4 is the latest maintenance release, containing<br />
          more than 250 bugfixes, build improvements and documentation changes since 3.12.3.
        </p>
        <h2 className="mt-6 whitespace-nowrap text-[24px] font-bold leading-[30px] tracking-[-.22px] text-[#3776ab]">Major new features of the 3.12 series, compared to 3.11</h2>
        <h3 className="mt-[31px] text-[21px] leading-[30px] tracking-[-.5px] text-[#999]">New features</h3>
        <div className="mt-2 flex items-center whitespace-nowrap">
          <span className="ml-[7px] mr-[11px] mt-0.5 size-1 bg-[#444]" />
          <span><span className="text-[#3776ab]">More flexible f-string parsing</span>, allowing many things previously disallowed (<span className="text-[#3776ab]">PEP 701</span>)</span>
        </div>
      </div>
    </div>
  );
}

function Browser() {
  return (
    <div className="flex h-[728px] flex-col overflow-hidden">
      <BrowserChrome />
      <div className="flex h-[647px] overflow-hidden">
        <SitePage />
        <div className="flex w-[17px] flex-col items-center justify-between bg-[#f1f1f1] pb-[6px]">
          <div className="flex flex-col items-center">
            <Icon w={7} h={17}><path d="M0 11h7L3.500 7z" fill="#a3a3a3" /></Icon>
            <div className="h-[145px] w-[13px] bg-[#c1c1c1]" />
          </div>
          <Icon w={7} h={5}><path d="M0 0h7L3.500 4z" fill="#505050" /></Icon>
        </div>
      </div>
    </div>
  );
}

/* ---------- taskbar ---------- */

const ChromeArt = () => (
  <>
    <circle cx="12" cy="12" r="11.500" fill="#fbc116" />
    <path d="M2 6.300A11.500 11.500 0 0 1 22 6.300L12 7l-4.500 7.500z" fill="#e33b2e" />
    <path d="M2 6.300A11.500 11.500 0 0 0 12 23.500l4.800-8.800L8 15z" fill="#2da94f" />
    <path d="M12 6.500h10.200A11.500 11.500 0 0 1 12 23.500l5-9z" fill="#fbc116" />
    <circle cx="12" cy="12" r="5.700" fill="#fff" />
    <circle cx="12" cy="12" r="4.500" fill="#3b7ded" />
  </>
);

const Lavender = () => {
  const petals: [number, number, number][] = [
    [3, 3, 2], [6, 7, 3], [10, 4, 3], [12, 10, 3.5], [17, 6, 3.5], [18, 13, 4], [23, 9, 4], [24, 16, 4], [30, 12, 4.5], [30, 18, 4], [35, 16, 4], [7, 11, 2.5], [13, 16, 2.5], [22, 20, 3], [34, 11, 2.5],
  ];
  return (
    <Icon w={68} h={38}>
      <path d="M34 20c12 2 22 9 32 18M14 31c14 2 34-5 52 7M54 16c2 8 5 15 11 21" stroke="#7aa03c" strokeWidth="2" />
      {petals.map(([x, y, r], i) => (
        <ellipse key={i} cx={x} cy={y} rx={r} ry={r * 0.8} fill={["#8f63c9", "#7a4fb5", "#a583d8"][i % 3]} transform={`rotate(30 ${x} ${y})`} />
      ))}
      <path d="M51 15l-11-3 8-1-5-6 8 4 2-7 2 7 7-4-4 6 5 3-8 1 3 4-6-3-5 4z" fill="#5f9930" />
      <path d="M14 28l-10-2 6-2-2-5 6 4 4-4-1 6 5 2-6 2-2 5-2-5-8 4z" fill="#689f34" />
      <path d="M21 29l6-4 9 4-9 4z" fill="#5a912b" />
    </Icon>
  );
};

const CloudSun = () => (
  <Icon w={26} h={24}>
    <circle cx="13.500" cy="12.500" r="10" fill="#f7941e" />
    <circle cx="12" cy="10" r="6" fill="#fba92c" opacity=".6" />
    <path d="M4 10c-4 0-4-5-.5-5C4 1 9.500 1 10.500 4.500c4 0 4 5.500 0 5.500z" fill="#cfdff8" stroke="#7f9fdb" />
    <path d="M14 22c-4 0-4-4.500-.5-4.500.5-4 5.500-4 6.500-1 5 0 5 5.500.5 5.500z" fill="#cfdff8" stroke="#7f9fdb" />
  </Icon>
);

const Cell = ({ line, active, children }: { line?: boolean; active?: boolean; children: React.ReactNode }) => (
  <div className={`flex w-12 shrink-0 flex-col items-center ${active ? "bg-[#f2f2f2]" : ""}`}>
    <div className="relative flex h-[38px] items-center pt-0.5">{children}</div>
    <div className={`h-0.5 ${active ? "w-12" : "w-10"} ${line ? "bg-[#0078d7]" : ""}`} />
  </div>
);

const Badge = () => (
  <div className="absolute -right-2 bottom-[2px] flex size-4 items-center justify-center rounded-full border border-[#777] bg-[#dcdcdc]/90 text-[12px] text-black">1</div>
);

function Taskbar() {
  return (
    <div className="flex h-10 bg-linear-to-r from-[#dadeda] via-[#d9d9de] to-[#dbdbdc] font-['Open_Sans',sans-serif] text-black">
      <div className="flex w-12 shrink-0 items-center justify-center">
        <Icon w={16} h={16}>
          <path d="M0 2.300L7 1.300v6.200H0zM8 1.200L16 0v7.500H8zM0 8.500h7v6.200L0 13.700zM8 8.500h8V16l-8-1.200z" fill="#000" />
        </Icon>
      </div>
      <div className="flex h-10 w-72 shrink-0 items-center border border-[#c3c5c8] bg-white pl-[10px]">
        <Icon w={18} h={18}>
          <circle cx="11" cy="6.500" r="5.300" stroke="#222" strokeWidth="1.300" />
          <path d="M7.200 10.300L1 16.500" stroke="#222" strokeWidth="1.300" />
        </Icon>
        <span className="ml-[11px] w-[180px] shrink-0 whitespace-nowrap text-[15px] tracking-[-.6px] text-[#333]">Type here to search</span>
        <Lavender />
      </div>
      <div className="flex w-[51px] shrink-0 items-center pl-4">
        <Icon w={17} h={16}>
          <path d="M1 0v2.500h10V0M1 16v-2.500h10V16M1.500 5h9v6h-9zM14.500 0v3M14.500 8v8" stroke="#111" strokeWidth="1.200" />
          <rect x="13" y="4" width="3" height="3" fill="#111" />
        </Icon>
      </div>
      <div className="flex shrink-0 gap-px">
        <Cell><Icon w={24} h={24}><EdgeArt /></Icon></Cell>
        <Cell>
          <Icon w={24} h={24}>
            <path d="M.5 8.500L12 1l11.500 7.500z" fill="#0d5aa5" />
            <path d="M2 8h20v7H2z" fill="#fff" />
            <path d="M.5 8.500L12 15.500l11.500-7V23H.5z" fill="#2bb3ee" />
            <path d="M.5 23l23-14.500V23z" fill="#1794dc" />
          </Icon>
        </Cell>
        <Cell>
          <Icon w={24} h={24}>
            <path d="M7 6V2.500h10V6" stroke="#2fa8e8" strokeWidth="2.200" />
            <path d="M1 5.500h22V21a2.500 2.500 0 0 1-2.500 2.500h-17A2.500 2.500 0 0 1 1 21z" fill="#1b4680" />
            <path d="M7.500 10h4v4h-4z" fill="#f25022" /><path d="M12.500 10h4v4h-4z" fill="#7fba00" />
            <path d="M7.500 15h4v4h-4z" fill="#00a4ef" /><path d="M12.500 15h4v4h-4z" fill="#ffb900" />
          </Icon>
        </Cell>
        <Cell>
          <Icon w={24} h={24}>
            <path d="M0 0h24v24H0z" fill="#fff" />
            <path d="M6 8h12v3.500H6zM7 12h10v7H7z" fill="#b5121b" />
            <path d="M11.500 7.500C7 7.500 7.500 4 9.500 4.500S12 7.500 12 7.500s.500-2.500 2.500-3 2.500 3-2 3" stroke="#b5121b" strokeWidth="1.500" />
            <path d="M10.500 8v11M13.500 8v11" stroke="#fff" strokeWidth=".8" />
          </Icon>
        </Cell>
        <Cell>
          <Icon w={22} h={24}>
            <path d="M3 16.500h16l2.500 7H.5z" fill="#f7941e" />
            <path d="M9 1h4l5.500 18c-3 2.500-12 2.500-15 0z" fill="#f58220" />
            <path d="M7.700 5.500h6.600l1.500 4.500H6.200zM5 14h12l1 3.500c-3 2-11 2-14 0z" fill="#eee" />
            <path d="M9 1h4l1.300 4H7.700z" fill="#f58220" />
          </Icon>
        </Cell>
        <Cell>
          <Icon w={22} h={22}>
            <path d="M5 1.500l14-.5 1.500 18H6z" fill="#8ec5e6" stroke="#5d9fc5" />
            <path d="M1 3h14.500v17H1z" fill="#bfe0f2" stroke="#6caed2" />
            <circle cx="8.500" cy="11.500" r="6" fill="#f47b20" />
            <path d="M6.500 7.800v7.400l6-3.700z" fill="#fff" />
          </Icon>
        </Cell>
        <Cell line><FaWhatsapp size={26} className="text-[#128050]" /><Badge /></Cell>
        <Cell line><Brave /></Cell>
        <Cell><Icon w={24} h={24}><ChromeArt /></Icon></Cell>
        <Cell line>
          <Icon w={24} h={24}><ChromeArt /></Icon>
          <div className="absolute -right-[3px] bottom-[3px] flex size-4 items-center justify-center rounded-full bg-[#0d4f94] text-[10px] text-white">J</div>
        </Cell>
        <Cell line active>
          <Icon w={22} h={20}>
            <path d="M.5 1h7l2 2.500H21V18.500H.5z" fill="#e8a824" />
            <path d="M.5 5H21v13.500H.5z" fill="#ffd662" />
            <path d="M4 11h14v8h-3.500v-4h-7v4H4z" fill="#2f8ddb" />
          </Icon>
        </Cell>
      </div>
      <div className="flex flex-1 items-center justify-end pr-[7px]">
        <CloudSun />
      </div>
      <div className="flex shrink-0 items-center">
        <span className="w-[54px] text-[14px] tracking-[-.6px]">27°C</span>
        <Icon w={112} h={20}>
          <path d="M1.500 13L7 7.500l5.500 5.500" stroke="#111" strokeWidth="1.300" />
          <path d="M28.500 7.500H39v7H28.500zM40.500 9.500v3" stroke="#111" strokeWidth="1.300" />
          <path d="M30.500 9.500h7v3.500h-7z" fill="#111" />
          <path d="M23.500 5v2.500h4V5M25.500 7.500v3.500h2M24.500 3.500v2M27 3.500v2" stroke="#111" />
          <path d="M50.500 6.500h7v8h-7zM57.500 9l3-1v5l-3-1M52 3.500c1.500-1 4-1 5 0M52 17.500c1.500 1 4 1 5 0" stroke="#111" strokeWidth="1.200" />
          <path d="M75 15C75 9 80 4.500 86 4.500M77.500 15.500c0-5 4-8.500 8.500-8.500M80 16c0-3.500 3-6.300 6-6.300M83 16c0-2 1-3.500 3-3.500" stroke="#222" strokeWidth="1.100" />
          <circle cx="85.500" cy="15.500" r="1.300" fill="#111" />
          <path d="M95.500 8h2.500l3-3v10l-3-3h-2.500z" stroke="#111" strokeWidth="1.100" />
          <path d="M103 8c1 1 1 3 0 4M105.500 6.500c2 2 2 5 0 7" stroke="#333" />
          <path d="M107.800 4.500c3 3 3 8 0 11" stroke="#999" />
        </Icon>
        <div className="ml-[6px] flex w-[58px] flex-col items-center whitespace-nowrap text-[12px] leading-[18px] tracking-[-.5px]">
          <span>9:19 AM</span>
          <span>6/18/2024</span>
        </div>
        <div className="relative ml-[15px] flex w-5 items-center">
          <Icon w={17} h={17}>
            <path d="M.5.5h16v12H8L4.500 16v-3.500h-4z" fill="#111" />
            <path d="M3 4h11M3 6.500h11M3 9h8" stroke="#ddd" />
          </Icon>
          <div className="absolute left-[8px] top-[7px] flex size-4 items-center justify-center rounded-full border border-[#777] bg-[#cfcfcf]/90 text-[12px]">1</div>
        </div>
        <div className="ml-4 mr-1 h-10 w-px bg-[#a9a9a9]" />
      </div>
    </div>
  );
}

export default function App() {
  return (
    <div className="relative h-[768px] w-[1366px] overflow-hidden">
      <Browser />
      <Explorer />
      <Taskbar />
    </div>
  );
}
